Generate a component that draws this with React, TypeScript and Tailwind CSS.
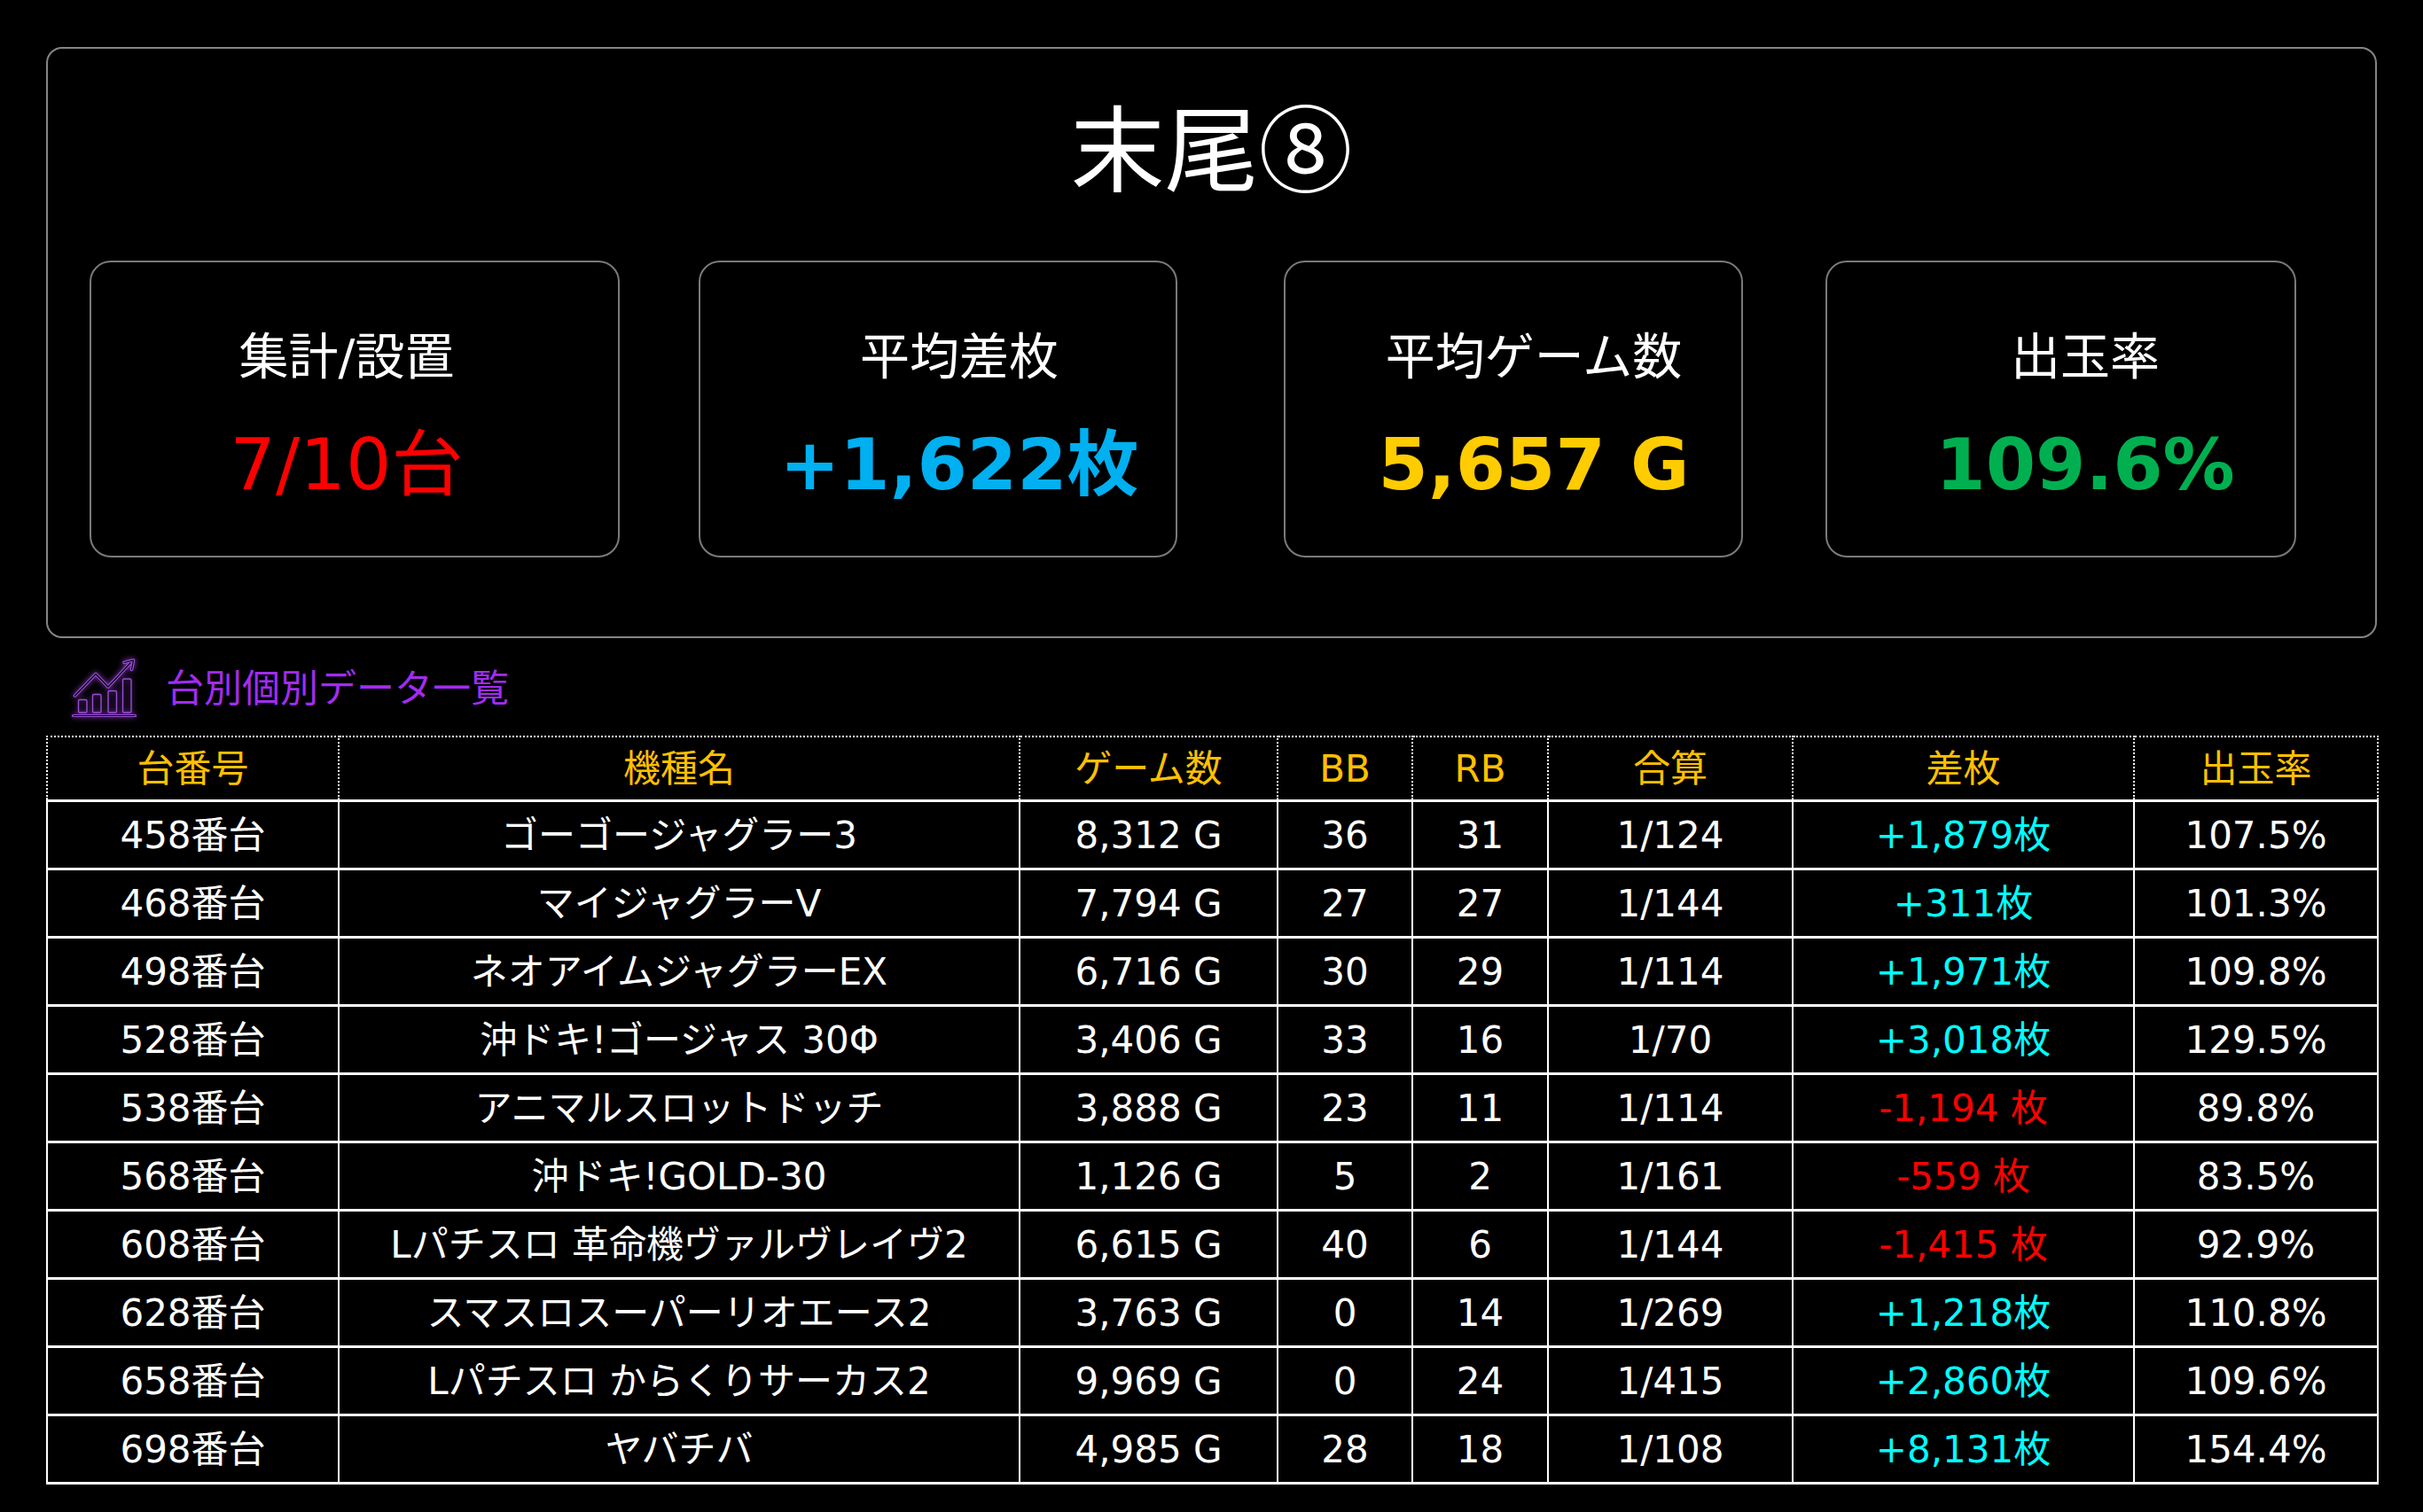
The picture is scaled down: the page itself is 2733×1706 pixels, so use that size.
const rows = [
  { no: "458番台", name: "ゴーゴージャグラー3", games: "8,312 G", bb: "36", rb: "31", total: "1/124", diff: "+1,879枚", rate: "107.5%" },
  { no: "468番台", name: "マイジャグラーV", games: "7,794 G", bb: "27", rb: "27", total: "1/144", diff: "+311枚", rate: "101.3%" },
  { no: "498番台", name: "ネオアイムジャグラーEX", games: "6,716 G", bb: "30", rb: "29", total: "1/114", diff: "+1,971枚", rate: "109.8%" },
  { no: "528番台", name: "沖ドキ!ゴージャス 30Φ", games: "3,406 G", bb: "33", rb: "16", total: "1/70", diff: "+3,018枚", rate: "129.5%" },
  { no: "538番台", name: "アニマルスロットドッチ", games: "3,888 G", bb: "23", rb: "11", total: "1/114", diff: "-1,194 枚", rate: "89.8%" },
  { no: "568番台", name: "沖ドキ!GOLD-30", games: "1,126 G", bb: "5", rb: "2", total: "1/161", diff: "-559 枚", rate: "83.5%" },
  { no: "608番台", name: "Lパチスロ 革命機ヴァルヴレイヴ2", games: "6,615 G", bb: "40", rb: "6", total: "1/144", diff: "-1,415 枚", rate: "92.9%" },
  { no: "628番台", name: "スマスロスーパーリオエース2", games: "3,763 G", bb: "0", rb: "14", total: "1/269", diff: "+1,218枚", rate: "110.8%" },
  { no: "658番台", name: "Lパチスロ からくりサーカス2", games: "9,969 G", bb: "0", rb: "24", total: "1/415", diff: "+2,860枚", rate: "109.6%" },
  { no: "698番台", name: "ヤバチバ", games: "4,985 G", bb: "28", rb: "18", total: "1/108", diff: "+8,131枚", rate: "154.4%" },
];

const headers = [
  { label: "台番号", w: "w-[329px]" },
  { label: "機種名", w: "w-[768px]" },
  { label: "ゲーム数", w: "w-[291px]" },
  { label: "BB", w: "w-[152px]" },
  { label: "RB", w: "w-[153px]" },
  { label: "合算", w: "w-[276px]" },
  { label: "差枚", w: "w-[385px]" },
  { label: "出玉率", w: "w-[275px]" },
];

function ChartIcon() {
  // purple "growth" chart with outlined bars and arrow
  return (
    <svg width="76" height="70" viewBox="20 10 76 70" fill="none" className="drop-shadow-[0_0_3px_#8e3fd0]">
      <g stroke="#9b4dd6" strokeLinejoin="round" strokeLinecap="round">
        <rect x="28.5" y="57.5" width="9.5" height="14.5" rx="1.5" strokeWidth="1.4" />
        <rect x="44.5" y="51.5" width="9.5" height="20.5" rx="1.5" strokeWidth="1.4" />
        <rect x="62" y="47.5" width="9.5" height="24.5" rx="1.5" strokeWidth="1.4" />
        <rect x="78.5" y="34" width="9.5" height="38" rx="1.5" strokeWidth="1.4" />
        <path d="M22.5 75.5 H92.5" strokeWidth="3.2" />
        <path d="M24.5 53 L48 28.5 L62 43 L87 16" strokeWidth="3.6" />
        <path d="M80 15.5 L90.5 13 L88.5 23.5" strokeWidth="3.6" />
      </g>
      <g stroke="#000" strokeLinejoin="round" strokeLinecap="round" strokeWidth="1.2">
        <path d="M24.5 53 L48 28.5 L62 43 L87 16" />
        <path d="M80 15.5 L90.5 13 L88.5 23.5" />
        <path d="M23 75.5 H92" />
      </g>
    </svg>
  );
}

function StatCard({ label, value, valueClass, width, shift }: { label: string; value: string; valueClass: string; width: string; shift: string }) {
  return (
    <div className={`flex h-[335px] flex-col items-center rounded-[24px] border-2 border-[#7a7a7a] pt-[79px] ${width} ${shift}`}>
      <div className="text-[56px] leading-none text-white">{label}</div>
      <div className={`mt-[53px] text-[81px] leading-none ${valueClass}`}>{value}</div>
    </div>
  );
}

export default function App() {
  return (
    <div className="min-h-[1706px] w-[2733px] bg-black pt-[53px] pl-[52px] font-['DejaVu_Sans','Noto_Sans_CJK_JP',sans-serif]">
      <div className="w-[2629px] rounded-[18px] border-2 border-[#858585] pt-[54px] pb-[89px]">
        <div className="text-center font-['Noto_Sans_CJK_JP',sans-serif] text-[106px] leading-none text-white">末尾⑧</div>
        <div className="mt-[79px] flex pl-[47px]">
          <StatCard label="集計/設置" value="7/10台" valueClass="text-[#ff0000]" width="w-[598px]" shift="pr-[18px]" />
          <div className="ml-[89px]">
            <StatCard label="平均差枚" value="+1,622枚" valueClass="font-bold text-[#00b0f0]" width="w-[540px]" shift="pl-[48px]" />
          </div>
          <div className="ml-[120px]">
            <StatCard label="平均ゲーム数" value="5,657 G" valueClass="font-bold text-[#ffcc00]" width="w-[518px]" shift="pl-[46px]" />
          </div>
          <div className="ml-[93px]">
            <StatCard label="出玉率" value="109.6%" valueClass="font-bold text-[#00b050]" width="w-[531px]" shift="pl-[55px]" />
          </div>
        </div>
      </div>

      <div className="mt-[22px] ml-[28px] flex items-center gap-[31px]">
        <ChartIcon />
        <div className="text-[43px] leading-none text-[#a12cf0]">台別個別データ一覧</div>
      </div>

      <table className="mt-[18px] w-[2629px] table-fixed border-collapse text-[42px] leading-none text-white">
        <thead>
          <tr>
            {headers.map((h) => (
              <th key={h.label} className={`h-[72px] border-2 border-dotted border-white p-0 pt-[3px] text-center font-normal text-[#ffc000] ${h.w}`}>
                {h.label}
              </th>
            ))}
          </tr>
        </thead>
        <tbody>
          {rows.map((r) => {
            const neg = r.diff.startsWith("-");
            return (
              <tr key={r.no} className="h-[77px]">
                <td className="border-x-2 border-y-[3px] border-white p-0 pt-[2px] text-center">{r.no}</td>
                <td className="border-x-2 border-y-[3px] border-white p-0 pt-[2px] text-center">{r.name}</td>
                <td className="border-x-2 border-y-[3px] border-white p-0 pt-[2px] text-center">{r.games}</td>
                <td className="border-x-2 border-y-[3px] border-white p-0 pt-[2px] text-center">{r.bb}</td>
                <td className="border-x-2 border-y-[3px] border-white p-0 pt-[2px] text-center">{r.rb}</td>
                <td className="border-x-2 border-y-[3px] border-white p-0 pt-[2px] text-center">{r.total}</td>
                <td className={`border-x-2 border-y-[3px] border-white p-0 pt-[2px] text-center ${neg ? "text-[#ff0000]" : "text-[#00ffff]"}`}>{r.diff}</td>
                <td className="border-x-2 border-y-[3px] border-white p-0 pt-[2px] text-center">{r.rate}</td>
              </tr>
            );
          })}
        </tbody>
      </table>
    </div>
  );
}
